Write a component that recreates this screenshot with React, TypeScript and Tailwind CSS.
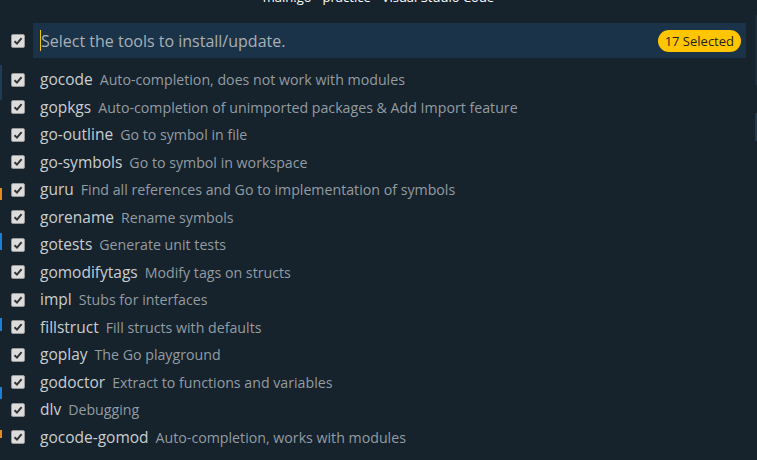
import React from 'react';

type Tool = { name: string; desc: string };

const tools: Tool[] = [
    { name: 'gocode', desc: 'Auto-completion, does not work with modules' },
    { name: 'gopkgs', desc: 'Auto-completion of unimported packages & Add Import feature' },
    { name: 'go-outline', desc: 'Go to symbol in file' },
    { name: 'go-symbols', desc: 'Go to symbol in workspace' },
    { name: 'guru', desc: 'Find all references and Go to implementation of symbols' },
    { name: 'gorename', desc: 'Rename symbols' },
    { name: 'gotests', desc: 'Generate unit tests' },
    { name: 'gomodifytags', desc: 'Modify tags on structs' },
    { name: 'impl', desc: 'Stubs for interfaces' },
    { name: 'fillstruct', desc: 'Fill structs with defaults' },
    { name: 'goplay', desc: 'The Go playground' },
    { name: 'godoctor', desc: 'Extract to functions and variables' },
    { name: 'dlv', desc: 'Debugging' },
    { name: 'gocode-gomod', desc: 'Auto-completion, works with modules' },
];

// Native-looking checked checkbox
const Check: React.FC = () => (
    <div className="w-[14px] h-[14px] rounded-[2px] bg-[#dcdcdc] border border-[#9a9a9a] flex items-center justify-center shrink-0">
        <svg width="10" height="10" viewBox="0 0 10 10">
            <path d="M1.5 5.2 L4 7.6 L8.6 2.2" fill="none" stroke="#333" strokeWidth="2" />
        </svg>
    </div>
);

export default function App() {
    return (
        <div
            className="relative w-[757px] h-[460px] overflow-hidden bg-[#16222c]"
            style={{ fontFamily: '"Open Sans", "Noto Sans", sans-serif' }}
        >
            {/* Window title, mostly cut off */}
            <div className="h-[6px] overflow-hidden">
                <div className="-mt-[11px] text-center text-[13px] leading-[16px] text-white">
                    main.go - practice - Visual Studio Code
                </div>
            </div>

            {/* Editor fragments at the left edge */}
            <div className="absolute left-0 top-[65px] w-[2px] h-[35px] bg-[#1f3b55]" />
            <div className="absolute left-0 top-[188px] w-[2px] h-[12px] bg-[#e8891c]" />
            <div className="absolute left-0 top-[233px] w-[2px] h-[17px] bg-[#1a7fd9]" />
            <div className="absolute left-0 top-[318px] w-[2px] h-[13px] bg-[#1a7fd9]" />
            <div className="absolute left-0 top-[387px] w-[2px] h-[12px] bg-[#1a7fd9]" />
            <div className="absolute left-0 top-[430px] w-[2px] h-[8px] bg-[#e8891c]" />

            {/* Scrollbar fragments at the right edge */}
            <div className="absolute right-0 top-[15px] w-[2px] h-[70px] bg-[#1d2c38]" />
            <div className="absolute right-0 top-[113px] w-[2px] h-[28px] bg-[#233a4e]" />

            {/* Input row */}
            <div className="flex items-center mt-[17px] pl-[11px] pr-[11px]">
                <Check />
                <div className="ml-[8px] flex-1 h-[35px] bg-[#1a3349] flex items-center pl-[7px] pr-[5px]">
                    <div className="w-[1px] h-[21px] bg-[#f5c400]" />
                    <span className="flex-1 text-[16px] text-[#a9b0b5]">Select the tools to install/update.</span>
                    <span className="rounded-full bg-[#ffc600] text-[#1e1e1e] text-[13px] leading-[22px] px-[7px]">
                        17 Selected
                    </span>
                </div>
            </div>

            {/* Tool list */}
            <div className="mt-[8px] flex flex-col">
                {tools.map((t) => (
                    <div key={t.name} className="flex items-center h-[27.5px] pl-[11px]">
                        <Check />
                        <span className="ml-[15px] text-[15.5px] text-[#c9ced1]">{t.name}</span>
                        <span className="ml-[7px] text-[14.2px] text-[#939ca2]">{t.desc}</span>
                    </div>
                ))}
            </div>
        </div>
    );
}
